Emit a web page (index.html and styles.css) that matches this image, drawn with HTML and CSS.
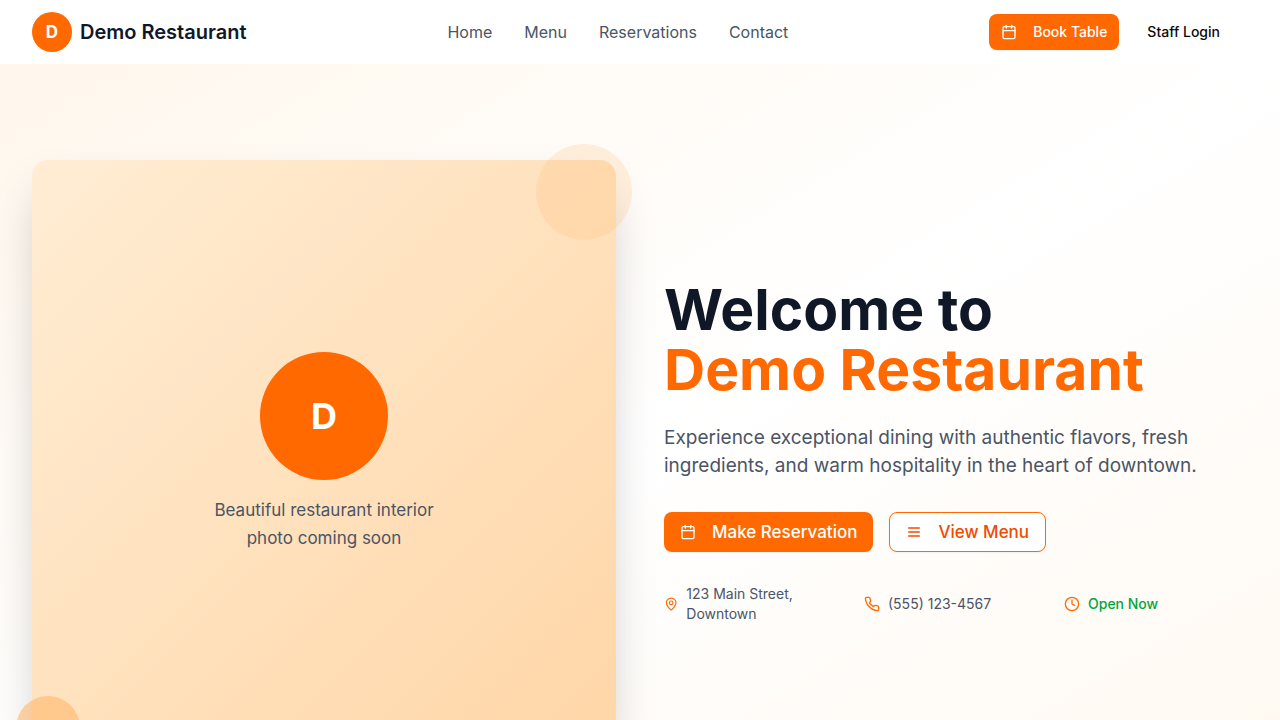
FILE: index.html
```html
<!DOCTYPE html>
<html lang="en">
<head>
<meta charset="utf-8">
<meta name="viewport" content="width=device-width, initial-scale=1">
<title>Demo Restaurant</title>
<link rel="stylesheet" href="styles.css">
</head>
<body>
<header class="site-header">
  <div class="brand">
    <span class="brand-mark">D</span>
    <span class="brand-name">Demo Restaurant</span>
  </div>
  <nav class="site-nav">
    <a href="#home">Home</a>
    <a href="#menu">Menu</a>
    <a href="#reservations">Reservations</a>
    <a href="#contact">Contact</a>
  </nav>
  <div class="header-actions">
    <button class="btn btn-small btn-primary" type="button">
      <svg class="icon" viewBox="0 0 24 24" aria-hidden="true"><path d="M8 2v4"/><path d="M16 2v4"/><rect width="18" height="18" x="3" y="4" rx="2"/><path d="M3 10h18"/></svg>
      Book Table
    </button>
    <button class="btn btn-small btn-ghost" type="button">Staff Login</button>
  </div>
</header>
<main class="hero" id="home">
  <div class="photo">
    <div class="photo-card">
      <span class="photo-mark">D</span>
      <p class="photo-caption">Beautiful restaurant interior<br>photo coming soon</p>
    </div>
    <span class="dot dot-top"></span>
    <span class="dot dot-bottom"></span>
  </div>
  <div class="intro">
    <h1 class="title">Welcome to <span class="title-accent">Demo Restaurant</span></h1>
    <p class="lead">Experience exceptional dining with authentic flavors, fresh ingredients, and warm hospitality in the heart of downtown.</p>
    <div class="intro-actions">
      <button class="btn btn-large btn-primary" type="button">
        <svg class="icon" viewBox="0 0 24 24" aria-hidden="true"><path d="M8 2v4"/><path d="M16 2v4"/><rect width="18" height="18" x="3" y="4" rx="2"/><path d="M3 10h18"/></svg>
        Make Reservation
      </button>
      <button class="btn btn-large btn-outline" type="button">
        <svg class="icon" viewBox="0 0 24 24" aria-hidden="true"><path d="M4 6h16"/><path d="M4 12h16"/><path d="M4 18h16"/></svg>
        View Menu
      </button>
    </div>
    <ul class="facts">
      <li class="fact">
        <svg class="icon" viewBox="0 0 24 24" aria-hidden="true"><path d="M20 10c0 4.993-5.539 10.193-7.399 11.799a1 1 0 0 1-1.202 0C9.539 20.193 4 14.993 4 10a8 8 0 0 1 16 0"/><circle cx="12" cy="10" r="3"/></svg>
        <span>123 Main Street, Downtown</span>
      </li>
      <li class="fact">
        <svg class="icon" viewBox="0 0 24 24" aria-hidden="true"><path d="M22 16.92v3a2 2 0 0 1-2.18 2 19.79 19.79 0 0 1-8.63-3.07 19.5 19.5 0 0 1-6-6 19.79 19.79 0 0 1-3.07-8.67A2 2 0 0 1 4.11 2h3a2 2 0 0 1 2 1.72 12.84 12.84 0 0 0 .7 2.81 2 2 0 0 1-.45 2.11L8.09 9.91a16 16 0 0 0 6 6l1.27-1.27a2 2 0 0 1 2.11-.45 12.84 12.84 0 0 0 2.81.7A2 2 0 0 1 22 16.92z"/></svg>
        <span>(555) 123-4567</span>
      </li>
      <li class="fact">
        <svg class="icon" viewBox="0 0 24 24" aria-hidden="true"><circle cx="12" cy="12" r="10"/><path d="M12 6v6l4 2"/></svg>
        <span class="open">Open Now</span>
      </li>
    </ul>
  </div>
</main>
</body>
</html>
```

FILE: styles.css
```css
*, *::before, *::after { box-sizing: border-box; }

body {
  margin: 0;
  background: #fff;
  color: #0a0a0a;
  font-family: Inter, "Liberation Sans", sans-serif;
  font-size: 16px;
  line-height: 24px;
}

h1, p, ul { margin: 0; padding: 0; }

.site-header {
  display: flex;
  align-items: center;
  justify-content: space-between;
  min-height: 64px;
  padding: 0 32px;
  background: #fff;
}

.brand { display: flex; align-items: center; gap: 8px; }

.brand-mark,
.photo-mark {
  display: flex;
  align-items: center;
  justify-content: center;
  border-radius: 50%;
  background: #ff6900;
  color: #fff;
  font-weight: 700;
}

.brand-mark { width: 40px; height: 40px; font-size: 17px; }

.brand-name {
  color: #101828;
  font-size: 20px;
  font-weight: 600;
  line-height: 28px;
}

.site-nav { display: flex; gap: 32px; }

.site-nav a { color: #4a5565; text-decoration: none; }

.header-actions { display: flex; gap: 16px; padding-right: 16px; }

.btn {
  display: inline-flex;
  align-items: center;
  justify-content: center;
  gap: 16px;
  border: 0;
  border-radius: 8px;
  font-family: inherit;
  font-weight: 500;
  white-space: nowrap;
  cursor: pointer;
}

.btn-small { height: 36px; padding: 0 12px; font-size: 14px; line-height: 20px; }

.btn-large { height: 40px; padding: 0 16px; font-size: 17px; line-height: 28px; }

.btn-primary {
  background: #ff6900;
  color: #fff;
  box-shadow: 0 1px 2px rgb(0 0 0 / 0.05);
}

.btn-ghost { background: transparent; color: #0a0a0a; }

.btn-outline {
  border: 1px solid #ff6900;
  background: #fff;
  color: #f54900;
  box-shadow: 0 1px 2px rgb(0 0 0 / 0.05);
}

.icon {
  width: 16px;
  height: 16px;
  fill: none;
  stroke: currentColor;
  stroke-width: 2;
  stroke-linecap: round;
  stroke-linejoin: round;
}

.hero {
  display: grid;
  grid-template-columns: 1fr 1fr;
  align-items: center;
  gap: 48px;
  padding: 96px 32px;
  overflow: hidden;
  background: linear-gradient(to bottom right in oklab, #fff7ed, #fff, #fff8f0);
}

.photo { position: relative; }

.photo-card {
  display: flex;
  flex-direction: column;
  align-items: center;
  justify-content: center;
  gap: 16px;
  aspect-ratio: 1;
  border-radius: 16px;
  background: linear-gradient(to bottom right in oklab, #ffedd4, #ffd6a7);
  box-shadow: 0 25px 50px -12px rgb(0 0 0 / 0.25);
}

.photo-mark { width: 128px; height: 128px; font-size: 36px; line-height: 40px; }

.photo-caption {
  color: #4a5565;
  font-size: 17px;
  line-height: 28px;
  text-align: center;
}

.dot { position: absolute; border-radius: 50%; }

.dot-top {
  top: -16px;
  right: -16px;
  width: 96px;
  height: 96px;
  background: #ffb86a;
  opacity: 0.2;
}

.dot-bottom {
  bottom: -16px;
  left: -16px;
  width: 64px;
  height: 64px;
  background: #ffb86a;
  opacity: 0.6;
}

.title {
  margin-bottom: 24px;
  color: #101828;
  font-size: 57px;
  font-weight: 700;
  line-height: 60px;
}

.title-accent { display: block; color: #ff6900; }

.lead {
  margin-bottom: 32px;
  color: #4a5565;
  font-size: 19px;
  line-height: 28px;
}

.intro-actions { display: flex; flex-wrap: wrap; gap: 16px; margin-bottom: 32px; }

.facts {
  display: grid;
  grid-template-columns: repeat(3, 1fr);
  gap: 16px;
  list-style: none;
  font-size: 14px;
  line-height: 20px;
}

.fact { display: flex; align-items: center; gap: 8px; color: #4a5565; }

.fact .icon { color: #ff6900; }

.open { color: #00a63e; font-weight: 500; }
```
